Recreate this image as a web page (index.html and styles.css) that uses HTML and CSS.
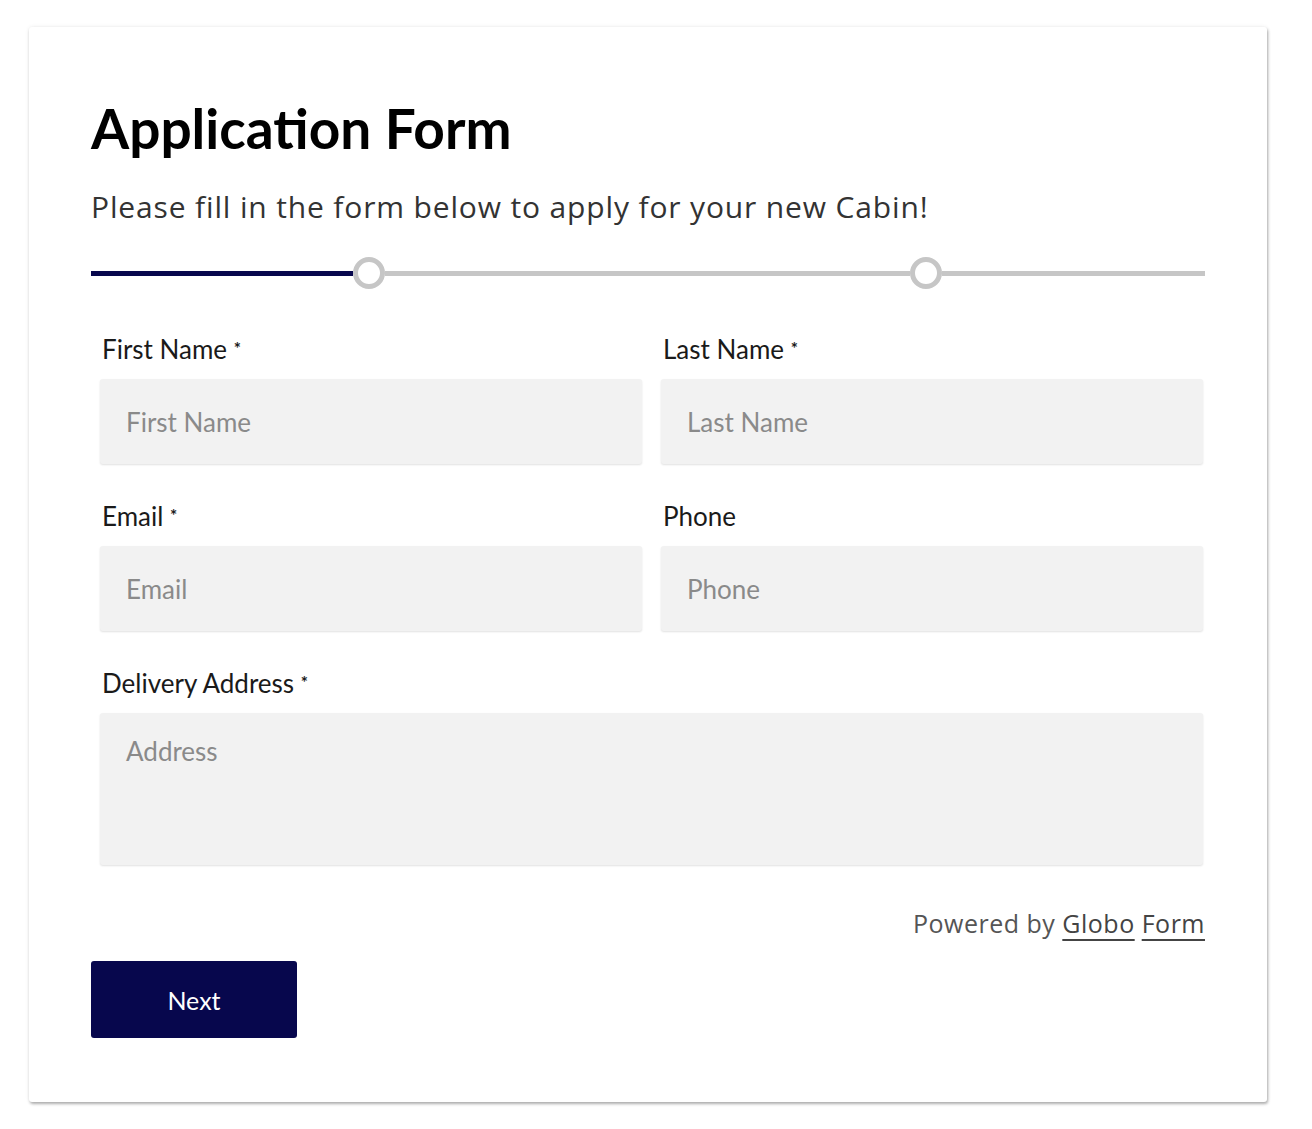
FILE: index.html
```html
<!DOCTYPE html>
<html>
<head>
    <meta charset="UTF-8">
    <title>Application Form</title>
    <link rel="stylesheet" href="styles.css">
</head>
<body>
    <div class="card">
        <h1>Application Form</h1>
        <p class="intro">Please fill in the form below to apply for your new Cabin!</p>

        <div class="progress">
            <div class="bar bar-done"></div>
            <div class="step"></div>
            <div class="bar bar-todo"></div>
            <div class="step"></div>
            <div class="bar bar-todo bar-last"></div>
        </div>

        <form class="fields">
            <div class="field">
                <label>First Name <span class="req">*</span></label>
                <input type="text" placeholder="First Name">
            </div>
            <div class="field">
                <label>Last Name <span class="req">*</span></label>
                <input type="text" placeholder="Last Name">
            </div>
            <div class="field">
                <label>Email <span class="req">*</span></label>
                <input type="text" placeholder="Email">
            </div>
            <div class="field">
                <label>Phone</label>
                <input type="text" placeholder="Phone">
            </div>
            <div class="field field-wide">
                <label>Delivery Address <span class="req">*</span></label>
                <textarea placeholder="Address"></textarea>
            </div>
        </form>

        <div class="powered">Powered by <a href="#">Globo</a> <a href="#">Form</a></div>

        <button class="next" type="button">Next</button>
    </div>
</body>
</html>
```

FILE: styles.css
```css
body {
    margin: 0;
    padding: 27px 0 27px 29px;
    background: #fff;
    font-family: Lato, "Open Sans", sans-serif;
}
.card {
    width: 1238px;
    box-sizing: border-box;
    padding: 68px 62px 64px;
    background: #fff;
    border-radius: 3px;
    box-shadow: 1px 2px 3px rgba(0,0,0,0.3), 0 0 4px rgba(0,0,0,0.08);
}
h1 {
    margin: 0;
    font-size: 55px;
    line-height: 66px;
    font-weight: 700;
    color: #000;
}
.intro {
    margin: 28px 0 0;
    font-family: "Open Sans", sans-serif;
    font-size: 30px;
    line-height: 36px;
    letter-spacing: 0.85px;
    color: #333;
}
.progress {
    display: flex;
    align-items: center;
    height: 32px;
    margin-top: 32px;
}
.bar {
    height: 5px;
}
.bar-done {
    width: 262px;
    background: #07074d;
}
.bar-todo {
    flex: 1;
    background: #c6c6c6;
}
.bar-last {
    flex: none;
    width: 263px;
}
.step {
    width: 32px;
    height: 32px;
    box-sizing: border-box;
    border: 5px solid #c6c6c6;
    border-radius: 50%;
    background: #fff;
}
.fields {
    display: grid;
    grid-template-columns: 1fr 1fr;
    column-gap: 19px;
    row-gap: 37px;
    margin: 45px 2px 0 9px;
}
.field {
    display: flex;
    flex-direction: column;
}
.field-wide {
    grid-column: 1 / 3;
}
.field label {
    padding-left: 2px;
    margin-bottom: 15px;
    font-size: 26px;
    line-height: 30px;
    color: #1a1a1a;
}
.req {
    font-size: 17px;
    font-weight: 700;
    line-height: 0;
    vertical-align: 4px;
}
.field input,
.field textarea {
    box-sizing: border-box;
    border: none;
    border-radius: 3px;
    background: #f2f2f2;
    box-shadow: 0 1px 2px rgba(0,0,0,0.12);
    font-family: Lato, sans-serif;
    font-size: 26px;
    color: #333;
    outline: none;
}
.field input {
    height: 85px;
    padding: 0 26px;
}
.field textarea {
    height: 152px;
    padding: 23px 26px;
    line-height: 31.2px;
    resize: none;
}
.field input::placeholder,
.field textarea::placeholder {
    color: #8a8a8a;
}
.powered {
    margin-top: 43px;
    text-align: right;
    font-family: "Open Sans", sans-serif;
    font-size: 25px;
    line-height: 30px;
    letter-spacing: 0.5px;
    color: #555;
}
.powered a {
    color: #444;
    text-decoration: underline;
    text-decoration-thickness: 2px;
    text-underline-offset: 6px;
}
.next {
    display: block;
    width: 206px;
    height: 77px;
    margin-top: 23px;
    border: none;
    border-radius: 3px;
    background: #07074d;
    color: #fff;
    font-family: Lato, sans-serif;
    font-size: 25px;
}
```
